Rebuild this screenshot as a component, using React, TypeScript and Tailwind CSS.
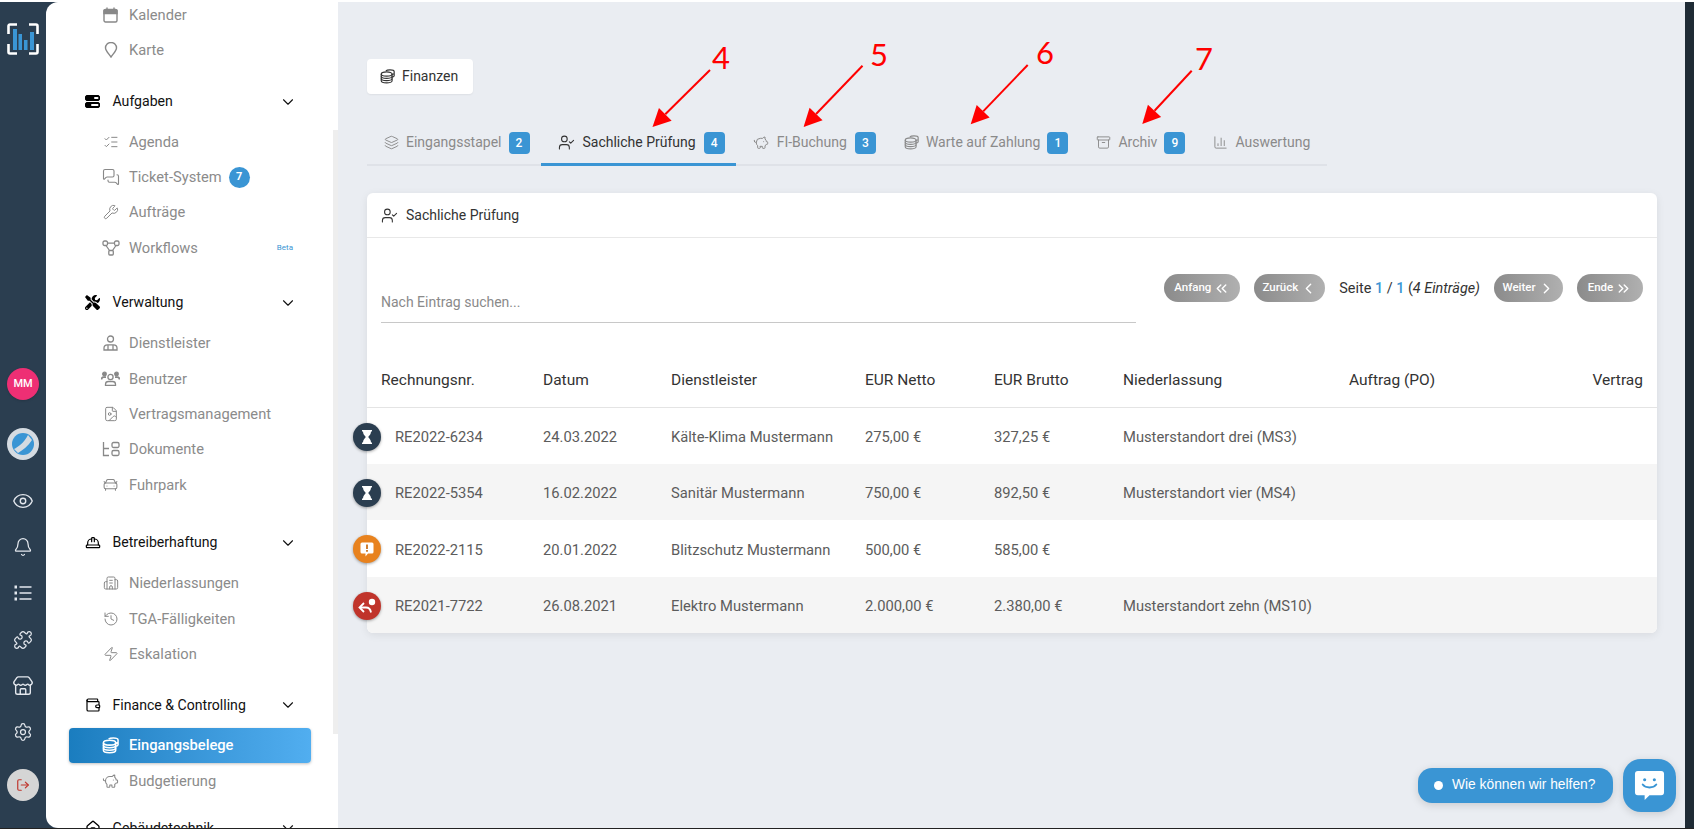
import type { ReactNode } from "react";
import {
  Archive,
  BarChart3,
  Bell,
  Building2,
  CarFront,
  ChevronDown,
  ChevronLeft,
  ChevronRight,
  ChevronsLeft,
  ChevronsRight,
  Eye,
  FileImage,
  History,
  Layers,
  ListChecks,
  LogOut,
  MessagesSquare,
  PiggyBank,
  Puzzle,
  Settings,
  Store,
  UserCheck,
  Wallet,
  Wrench,
  Zap,
  HardHat,
  Home,
} from "lucide-react";
import { FaTools } from "react-icons/fa";

const FONT = "font-['Roboto',sans-serif]";

function CoinStack({ size = 16, strokeWidth = 1.4 }: { size?: number; strokeWidth?: number }) {
  return (
    <svg width={size} height={size} viewBox="0 0 18 18" fill="none" stroke="currentColor" strokeWidth={strokeWidth}>
      <ellipse cx="8" cy="6" rx="6.5" ry="2.6" />
      <path d="M1.5 6v8c0 1.5 3 2.6 6.5 2.6s6.5-1.1 6.5-2.6V6" />
      <path d="M1.5 8.7c0 1.5 3 2.6 6.5 2.6s6.5-1.1 6.5-2.6M1.5 11.4c0 1.5 3 2.6 6.5 2.6s6.5-1.1 6.5-2.6" />
      <path d="M7 2.2C8 1.2 10 1 12 1c2.8 0 5 .9 5 2.1v5c0 .8-1 1.4-2.5 1.7M14.5 6.5C15.8 6.2 17 5.7 17 5" />
    </svg>
  );
}

function CalendarIcon() {
  return (
    <svg width="15" height="16" viewBox="0 0 15 16" fill="none" stroke="currentColor" strokeWidth="1.4">
      <rect x="1" y="2.5" width="13" height="12.5" rx="1.5" />
      <path d="M1 3.5h13v3H1z" fill="currentColor" />
      <path d="M4 .5V3M11 .5V3" />
    </svg>
  );
}

function PinIcon() {
  return (
    <svg width="14" height="16" viewBox="0 0 14 16" fill="none" stroke="currentColor" strokeWidth="1.4">
      <path d="M7 15C4.5 11.5 1.5 8.5 1.5 6a5.5 5.5 0 0 1 11 0c0 2.500-3 5.500-5.500 9z" />
    </svg>
  );
}

function WorkflowIcon() {
  return (
    <svg width="18" height="16" viewBox="0 0 18 16" fill="none" stroke="currentColor" strokeWidth="1.3">
      <rect x="1" y="1" width="4.5" height="4.5" rx="1.5" />
      <rect x="12.5" y="1" width="4.5" height="4.5" rx="1.5" />
      <rect x="6.8" y="10.5" width="4.5" height="4.5" rx="1" />
      <path d="M5.5 3.2h7M4 5.5l3.5 5M14 5.5l-3.500 5" />
    </svg>
  );
}

function ProviderIcon() {
  return (
    <svg width="15" height="16" viewBox="0 0 15 16" fill="none" stroke="currentColor" strokeWidth="1.3">
      <circle cx="7.5" cy="4" r="3" />
      <path d="M1 15v-2c0-2 1.5-3.200 3.500-3.200h6c2 0 3.500 1.200 3.500 3.200v2z" />
      <path d="M5 10v5M10 10v5" />
    </svg>
  );
}

function PeopleIcon() {
  return (
    <svg width="19" height="15" viewBox="0 0 19 15" fill="none" stroke="currentColor" strokeWidth="1.3">
      <circle cx="9.5" cy="6" r="2.6" />
      <path d="M4.500 14.300v-1c0-1.800 1.300-2.800 3-2.800h4c1.700 0 3 1 3 2.800v1z" />
      <circle cx="3.5" cy="3" r="1.8" fill="currentColor" />
      <circle cx="15.5" cy="3" r="1.8" fill="currentColor" />
      <path d="M.5 8.500c0-1.500 1-2.300 2.500-2.300h2M18.500 8.500c0-1.500-1-2.300-2.500-2.300h-2" strokeWidth="1.8" />
    </svg>
  );
}

function TreeIcon() {
  return (
    <svg width="18" height="16" viewBox="0 0 18 16" fill="none" stroke="currentColor" strokeWidth="1.3">
      <path d="M1.500 1v13.500H7M1.500 7.500H7" />
      <rect x="10" y="1.5" width="7" height="5" rx="1.5" />
      <rect x="10" y="9.5" width="7" height="5" rx="1.5" />
    </svg>
  );
}

function TaskBarsIcon() {
  return (
    <svg width="15" height="13" viewBox="0 0 15 13">
      <rect x="0.5" y="0.5" width="14" height="5" rx="1.5" fill="#000" stroke="#000" />
      <rect x="9" y="2" width="4.5" height="2" rx="1" fill="#fff" />
      <rect x="0.5" y="7.5" width="14" height="5" rx="1.5" fill="#000" stroke="#000" />
      <rect x="6" y="9" width="7.5" height="2" rx="1" fill="#fff" />
    </svg>
  );
}

function BulletListIcon() {
  return (
    <svg width="20" height="20" viewBox="0 0 20 20" fill="none" stroke="currentColor" strokeWidth="1.4">
      <path d="M6.500 4h12M6.500 10h12M6.500 16h12" />
      <rect x="1.5" y="2.5" width="2.5" height="3" fill="currentColor" stroke="none" />
      <rect x="1.5" y="8.5" width="2.5" height="3" fill="currentColor" stroke="none" />
      <rect x="1.5" y="14.5" width="2.5" height="3" fill="currentColor" stroke="none" />
    </svg>
  );
}

function SubItem({ icon, label, extra, className = "" }: { icon: ReactNode; label: string; extra?: ReactNode; className?: string }) {
  return (
    <div className={`flex h-[35.3px] items-center pl-[52px] pr-[45px] text-[14.7px] text-[#8b8b8b] ${className}`}>
      <span className="flex w-[31px] shrink-0 items-center justify-center pr-[6px] text-[#888]">{icon}</span>
      <span>{label}</span>
      {extra}
    </div>
  );
}

function Section({ icon, label, className = "" }: { icon: ReactNode; label: string; className?: string }) {
  return (
    <div className={`flex h-[35px] items-center pl-[38.5px] pr-[41px] text-[14.1px] text-[#111] ${className}`}>
      <span className="flex w-[28px] shrink-0 items-center text-black">{icon}</span>
      <span>{label}</span>
      <ChevronDown className="ml-auto" size={18} strokeWidth={1.5} />
    </div>
  );
}

function Tab({
  icon,
  label,
  count,
  active,
  className = "gap-[7px]",
}: {
  icon: ReactNode;
  label: string;
  count?: number;
  active?: boolean;
  className?: string;
}) {
  return (
    <div
      className={`-mb-[2px] flex h-[42px] items-center whitespace-nowrap border-b-[3px] pb-[2px] pl-[17px] pr-[11px] text-[14px] ${
        active ? "border-[#3a95d4] text-[#333]" : "border-transparent text-[#8a8a8a]"
      } ${className}`}
    >
      {icon}
      <span>{label}</span>
      {count !== undefined && (
        <span className="flex h-[22px] w-[21px] items-center justify-center rounded-[4px] bg-[#3a95d4] text-[12px] font-medium text-white">
          {count}
        </span>
      )}
    </div>
  );
}

function PageButton({ label, icon, width }: { label: string; icon: ReactNode; width: string }) {
  return (
    <div
      className={`flex h-[28px] items-center justify-center gap-[2px] rounded-full bg-gradient-to-r from-[#8b8b8b] to-[#b0b0b0] text-[11.5px] font-medium text-white ${width}`}
    >
      <span>{label}</span>
      {icon}
    </div>
  );
}

const rows = [
  { nr: "RE2022-6234", date: "24.03.2022", name: "Kälte-Klima Mustermann", netto: "275,00 €", brutto: "327,25 €", nl: "Musterstandort drei (MS3)", status: "wait" },
  { nr: "RE2022-5354", date: "16.02.2022", name: "Sanitär Mustermann", netto: "750,00 €", brutto: "892,50 €", nl: "Musterstandort vier (MS4)", status: "wait" },
  { nr: "RE2022-2115", date: "20.01.2022", name: "Blitzschutz Mustermann", netto: "500,00 €", brutto: "585,00 €", nl: "", status: "warn" },
  { nr: "RE2021-7722", date: "26.08.2021", name: "Elektro Mustermann", netto: "2.000,00 €", brutto: "2.380,00 €", nl: "Musterstandort zehn (MS10)", status: "back" },
];

function StatusDot({ status }: { status: string }) {
  const color = status === "wait" ? "bg-[#2b3e50]" : status === "warn" ? "bg-[#e8821e]" : "bg-[#c0342b]";
  return (
    <span
      className={`absolute left-[-14px] top-[calc(50%+1px)] flex h-[28px] w-[28px] -translate-y-1/2 items-center justify-center rounded-full text-white shadow-[0_1px_3px_rgba(0,0,0,0.35)] ${color}`}
    >
      {status === "wait" && (
        <svg width="12" height="14" viewBox="0 0 12 14" fill="#fff">
          <path d="M1 0h10v1.500H10c0 2.500-1.500 4-2.800 5.500C8.500 8.500 10 10 10 12.500h1V14H1v-1.500h1C2 10 3.500 8.500 4.800 7 3.500 5.500 2 4 2 1.500H1z" />
        </svg>
      )}
      {status === "warn" && (
        <svg width="14" height="15" viewBox="0 0 14 15">
          <path d="M2 .5h10A1.500 1.500 0 0 1 13.500 2v8a1.500 1.500 0 0 1-1.500 1.500H8L5.500 14.500v-3H2A1.500 1.500 0 0 1 .5 10V2A1.500 1.500 0 0 1 2 .5z" fill="#fff" />
          <path d="M7 2.500V7M7 8v1.800" stroke="#c96a10" strokeWidth="1.7" />
        </svg>
      )}
      {status === "back" && (
        <svg width="18" height="16" viewBox="0 0 18 16" fill="none" stroke="#fff" strokeWidth="1.8">
          <path d="M6 5 1.500 9.500 6 14" />
          <path d="M2 9.500h6c3 0 4.500 1.500 5 5" />
          <circle cx="14" cy="4" r="3.200" fill="#fff" stroke="none" />
        </svg>
      )}
    </span>
  );
}

function Annotation({ n, pos, x1, y1, x2, y2 }: { n: string; pos: string; x1: number; y1: number; x2: number; y2: number }) {
  const dx = x2 - x1;
  const dy = y2 - y1;
  const len = Math.hypot(dx, dy);
  const ux = dx / len;
  const uy = dy / len;
  const bx = x2 - ux * 18;
  const by = y2 - uy * 18;
  const pts = `${x2},${y2} ${bx - uy * 9},${by + ux * 9} ${bx + uy * 9},${by - ux * 9}`;
  return (
    <>
      <svg className="pointer-events-none absolute left-0 top-0" width="1696" height="831">
        <line x1={x1} y1={y1} x2={bx} y2={by} stroke="#ff0000" strokeWidth="2" />
        <polygon points={pts} fill="#ff0000" />
      </svg>
      <span className={`absolute font-['Lato',sans-serif] text-[31px] leading-none text-[#ff0000] ${pos}`}>{n}</span>
    </>
  );
}

export default function App() {
  return (
    <div className={`relative h-[831px] w-[1696px] overflow-hidden bg-white pr-[2px] pt-[2px] ${FONT}`}>
      <div className="flex h-[827px] border-b border-[#222] bg-[#2b3e50]">
        {/* Icon rail */}
        <aside className="flex w-[46px] shrink-0 flex-col items-center text-[#e4e8ee]">
          <svg className="mt-[21px]" width="32" height="32" viewBox="0 0 32 32" fill="none">
            <path d="M10 1.500H3A1.500 1.500 0 0 0 1.500 3v8M22 1.500h7A1.500 1.500 0 0 1 30.500 3v8M10 30.500H3A1.500 1.500 0 0 1 1.500 29v-8M22 30.500h7a1.500 1.500 0 0 0 1.500-1.500v-8" stroke="#fff" strokeWidth="2.6" />
            <rect x="6" y="6" width="4" height="21" fill="#3a95d4" />
            <rect x="11.5" y="11" width="3.5" height="16" fill="#3a95d4" />
            <rect x="17" y="17" width="3.5" height="10" fill="#3a95d4" />
            <rect x="23" y="9" width="4" height="18" fill="#3a95d4" />
          </svg>
          <span className="mt-[313px] flex h-[32px] w-[32px] items-center justify-center rounded-full bg-[#ee2f74] text-[11px] font-medium text-white shadow">
            MM
          </span>
          <span className="mt-[28px] flex h-[32px] w-[32px] items-center justify-center rounded-full bg-[#d5dbe1]">
            <svg width="24" height="24" viewBox="0 0 24 24">
              <circle cx="12" cy="12" r="11" fill="#3a95d4" />
              <path d="M3 17C7 15 13 11 17 3l4 5C17 14 12 18 7 21z" fill="#d5dbe1" />
            </svg>
          </span>
          <Eye className="mt-[30px]" size={22} strokeWidth={1.5} />
          <Bell className="mt-[25px]" size={20} strokeWidth={1.5} />
          <span className="mt-[26px]">
            <BulletListIcon />
          </span>
          <Puzzle className="mt-[27px]" size={20} strokeWidth={1.5} />
          <Store className="mt-[25px]" size={22} strokeWidth={1.5} />
          <Settings className="mt-[25px]" size={20} strokeWidth={1.5} />
          <span className="mt-[27px] flex h-[32px] w-[32px] items-center justify-center rounded-full bg-[#d5d5d5] text-[#c0342b]">
            <LogOut size={14} strokeWidth={2} />
          </span>
        </aside>

        {/* Sidebar */}
        <nav className="relative h-[826px] w-[292px] shrink-0 overflow-hidden rounded-l-[12px] bg-white">
          <div className="absolute right-0 top-[128px] h-[604px] w-[5px] bg-[#eeeeee]" />
          <div className="-mt-[5px] flex flex-col">
            <SubItem icon={<CalendarIcon />} label="Kalender" />
            <SubItem icon={<PinIcon />} label="Karte" />
            <Section className="mt-[16.5px]" icon={<TaskBarsIcon />} label="Aufgaben" />
            <SubItem className="mt-[5px]" icon={<ListChecks size={16} strokeWidth={1.5} />} label="Agenda" />
            <SubItem
              icon={<MessagesSquare size={18} strokeWidth={1.5} />}
              label="Ticket-System"
              extra={
                <span className="ml-[7px] flex h-[21px] w-[21px] items-center justify-center rounded-full bg-[#3a95d4] text-[11px] font-bold text-white">
                  7
                </span>
              }
            />
            <SubItem icon={<Wrench size={16} strokeWidth={1.5} />} label="Aufträge" />
            <SubItem
              icon={<WorkflowIcon />}
              label="Workflows"
              extra={<span className="ml-auto text-[8px] text-[#3a95d4]">Beta</span>}
            />
            <Section className="mt-[20px]" icon={<FaTools size={15} />} label="Verwaltung" />
            <SubItem className="mt-[5.5px]" icon={<ProviderIcon />} label="Dienstleister" />
            <SubItem icon={<PeopleIcon />} label="Benutzer" />
            <SubItem icon={<FileImage size={16} strokeWidth={1.5} />} label="Vertragsmanagement" />
            <SubItem icon={<TreeIcon />} label="Dokumente" />
            <SubItem icon={<CarFront size={17} strokeWidth={1.5} />} label="Fuhrpark" />
            <Section className="mt-[23px]" icon={<HardHat size={16} strokeWidth={1.8} />} label="Betreiberhaftung" />
            <SubItem className="mt-[5.5px]" icon={<Building2 size={16} strokeWidth={1.5} />} label="Niederlassungen" />
            <SubItem icon={<History size={16} strokeWidth={1.5} />} label="TGA-Fälligkeiten" />
            <SubItem icon={<Zap size={16} strokeWidth={1.5} />} label="Eskalation" />
            <Section className="mt-[16px]" icon={<Wallet size={16} strokeWidth={1.8} />} label="Finance & Controlling" />
            <div className="mx-[23px] mt-[5px] flex h-[35px] w-[242px] items-center rounded-[4px] bg-gradient-to-r from-[#1a7dbf] to-[#51aef0] pl-[29px] text-[14.7px] font-medium text-white shadow-[0_1px_3px_rgba(0,0,0,0.25)]">
              <span className="flex w-[31px] items-center justify-center pr-[6px]">
                <CoinStack size={17} strokeWidth={1.6} />
              </span>
              Eingangsbelege
            </div>
            <SubItem className="mt-[1px]" icon={<PiggyBank size={17} strokeWidth={1.5} />} label="Budgetierung" />
            <Section className="mt-[12px]" icon={<Home size={16} strokeWidth={2} />} label="Gebäudetechnik" />
          </div>
        </nav>

        {/* Main */}
        <main className="relative h-[826px] flex-1 bg-[#eaedf2] pl-[29px] pr-[28px] pt-[57px]">
          <div className="flex h-[35px] w-[106px] items-center gap-[7px] rounded-[4px] bg-white pl-[13px] text-[14px] text-[#333] shadow-[0_1px_2px_rgba(0,0,0,0.06)]">
            <CoinStack size={15} />
            Finanzen
          </div>

          <div className="mt-[30px] flex h-[42px] w-[960px] border-b-2 border-[#dfe2e8]">
            <Tab icon={<Layers size={15} strokeWidth={1.5} />} label="Eingangsstapel" count={2} />
            <Tab className="gap-[8px]" icon={<UserCheck size={17} strokeWidth={1.5} />} label="Sachliche Prüfung" count={4} active />
            <Tab className="gap-[8px]" icon={<PiggyBank size={16} strokeWidth={1.5} />} label="FI-Buchung" count={3} />
            <Tab icon={<CoinStack size={15} />} label="Warte auf Zahlung" count={1} />
            <Tab icon={<Archive size={15} strokeWidth={1.5} />} label="Archiv" count={9} />
            <Tab icon={<BarChart3 size={15} strokeWidth={1.5} />} label="Auswertung" />
          </div>

          <section className="mt-[27px] rounded-[6px] bg-white shadow-[0_2px_8px_rgba(0,0,0,0.08)]">
            <div className="flex h-[45px] items-center gap-[8px] border-b border-[#e8e8e8] pl-[14px] text-[14px] text-[#333]">
              <UserCheck size={17} strokeWidth={1.5} />
              Sachliche Prüfung
            </div>

            <div className="flex items-start px-[14px] pt-[36px]">
              <div className="mt-[7px] flex h-[42px] w-[755px] items-center border-b border-[#c8c8c8] pt-[2px] text-[14px] text-[#8a8a8a]">
                Nach Eintrag suchen...
              </div>
              <div className="ml-auto flex items-center text-[14.4px] text-[#333]">
                <PageButton label="Anfang" width="w-[76px]" icon={<ChevronsLeft size={17} />} />
                <PageButton label="Zurück" width="w-[71px] ml-[14px]" icon={<ChevronLeft size={17} />} />
                <span className="mx-[14px] pt-[1px]">
                  Seite <span className="font-medium text-[#3a95d4]">1</span> /{" "}
                  <span className="font-medium text-[#3a95d4]">1</span> (<em>4 Einträge)</em>
                </span>
                <PageButton label="Weiter" width="w-[69px]" icon={<ChevronRight size={17} />} />
                <PageButton label="Ende" width="w-[66px] ml-[14px]" icon={<ChevronsRight size={17} />} />
              </div>
            </div>

            <table className="mt-[22px] w-full table-fixed border-collapse text-[14.75px]">
              <colgroup>
                <col className="w-[176px]" />
                <col className="w-[128px]" />
                <col className="w-[194px]" />
                <col className="w-[129px]" />
                <col className="w-[129px]" />
                <col className="w-[226px]" />
                <col className="w-[160px]" />
                <col />
              </colgroup>
              <thead>
                <tr className="h-[62px] border-b border-[#e4e4e4] text-left text-[15.5px] text-[#333]">
                  <th className="pb-[14px] pl-[14px] align-bottom font-normal">Rechnungsnr.</th>
                  <th className="pb-[14px] align-bottom font-normal">Datum</th>
                  <th className="pb-[14px] align-bottom font-normal">Dienstleister</th>
                  <th className="pb-[14px] align-bottom font-normal">EUR Netto</th>
                  <th className="pb-[14px] align-bottom font-normal">EUR Brutto</th>
                  <th className="pb-[14px] align-bottom font-normal">Niederlassung</th>
                  <th className="pb-[14px] align-bottom font-normal">Auftrag (PO)</th>
                  <th className="pb-[14px] pr-[14px] text-right align-bottom font-normal">Vertrag</th>
                </tr>
              </thead>
              <tbody className="text-[#5c5c5c]">
                {rows.map((r, i) => (
                  <tr key={r.nr} className={`h-[56.5px] ${i % 2 === 1 ? "bg-[#f5f5f5]" : ""}`}>
                    <td className={`relative pl-[28px] pt-[3px] ${i === 3 ? "rounded-bl-[6px]" : ""}`}>
                      <StatusDot status={r.status} />
                      {r.nr}
                    </td>
                    <td className="pt-[3px]">{r.date}</td>
                    <td className="pt-[3px]">{r.name}</td>
                    <td className="pt-[3px]">{r.netto}</td>
                    <td className="pt-[3px]">{r.brutto}</td>
                    <td className="pt-[3px]">{r.nl}</td>
                    <td />
                    <td className={i === 3 ? "rounded-br-[6px]" : ""} />
                  </tr>
                ))}
              </tbody>
            </table>
          </section>

          {/* Chat widget */}
          <div className="absolute bottom-[16px] right-[9px] flex items-center gap-[10px]">
            <div className="flex h-[35px] w-[195px] items-center gap-[9px] rounded-[14px] bg-[#3a95d4] pl-[16px] font-['Liberation_Sans',sans-serif] text-[13.8px] text-white shadow-[0_2px_8px_rgba(0,0,0,0.15)]">
              <span className="h-[9px] w-[9px] rounded-full bg-white" />
              Wie können wir helfen?
            </div>
            <div className="flex h-[53px] w-[53px] items-center justify-center rounded-[18px] bg-[#3a95d4] shadow-[0_2px_8px_rgba(0,0,0,0.15)]">
              <svg width="31" height="31" viewBox="0 0 32 32">
                <path d="M4 1h24a3 3 0 0 1 3 3v19a3 3 0 0 1-3 3H16l-5 5v-5H4a3 3 0 0 1-3-3V4a3 3 0 0 1 3-3z" fill="#fff" />
                <circle cx="11" cy="10" r="1.6" fill="#3a95d4" />
                <circle cx="21" cy="10" r="1.6" fill="#3a95d4" />
                <path d="M9 15c3 4 11 4 14 0" stroke="#3a95d4" strokeWidth="2" fill="none" strokeLinecap="round" />
              </svg>
            </div>
          </div>
        </main>

        <div className="w-[9px] shrink-0 bg-[#1f2b35]" />
      </div>

      <Annotation n="4" pos="left-[712px] top-[42px]" x1={710} y1={70} x2={652.5} y2={127} />
      <Annotation n="5" pos="left-[870px] top-[39px]" x1={862.5} y1={65.7} x2={803.6} y2={127} />
      <Annotation n="6" pos="left-[1036px] top-[37px]" x1={1027.7} y1={65} x2={970.7} y2={124.3} />
      <Annotation n="7" pos="left-[1195px] top-[43px]" x1={1191.7} y1={70.7} x2={1142.3} y2={124} />
    </div>
  );
}
